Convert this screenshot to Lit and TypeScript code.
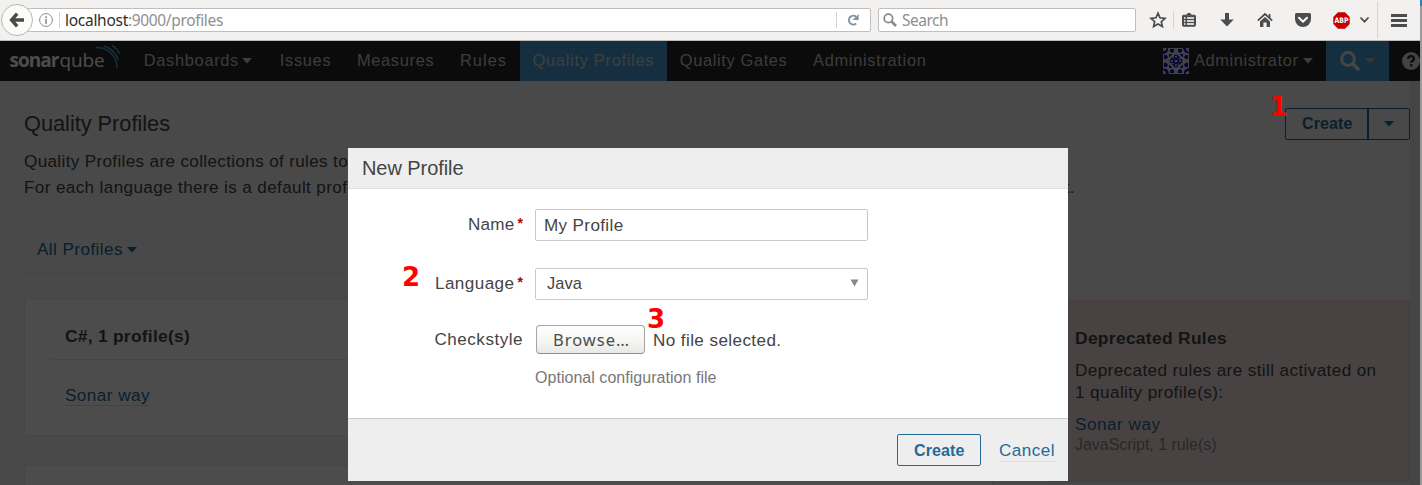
import { LitElement, html, svg, css } from "lit";
import { customElement, property } from "lit/decorators.js";

/** A single line of text tracked so that it takes up exactly `w` pixels. */
@customElement("fit-text")
class FitText extends LitElement {
  @property() text = "";
  @property({ type: Number }) w = 0;
  static styles = css`
    :host { display: inline-block; white-space: pre; flex: none; }
  `;
  render() {
    return html`<span>${this.text}</span>`;
  }
  updated() {
    const span = this.renderRoot.querySelector("span") as HTMLElement;
    span.style.letterSpacing = "0";
    const natural = span.getBoundingClientRect().width;
    span.style.letterSpacing = `${(this.w - natural) / this.text.length}px`;
  }
}

const fit = (text: string, w: number) => html`<fit-text .text=${text} .w=${w}></fit-text>`;
const caret = (w = 10) => html`<svg class="caret" width=${w} height="6" viewBox="0 0 10 6"><path d="M0 0H10L5 5.6Z" fill="currentColor" /></svg>`;

@customElement("browser-bar")
class BrowserBar extends LitElement {
  static styles = css`
    :host { display: flex; align-items: center; height: 40px; background: #f2f1f0; border-bottom: 1px solid #bdbbb8; font: 15.5px/24px "Noto Sans", sans-serif; color: #8f8f8f; position: relative; }
    svg { display: block; overflow: visible; }
    .back { width: 30px; height: 30px; flex: none; border: 1px solid #bab8b5; border-radius: 50%; background: #fbfbfa; margin-left: 1px; display: grid; place-items: center; z-index: 1; }
    .url { width: 856px; margin-left: -18px; padding-left: 23px; box-sizing: border-box; }
    .field { display: flex; align-items: center; height: 24px; box-sizing: border-box; border: 1px solid #c1bfbd; border-radius: 2px; background: #fff; }
    .info { margin-right: 6px; }
    .sep { width: 1px; height: 16px; background: #d4d4d4; }
    .host { color: #2e2e2e; margin-left: 5px; }
    .grow { flex: 1; }
    .reload { margin: 0 11px 0 10px; }
    .search { width: 258px; margin-left: 7px; padding-left: 4px; }
    .search fit-text { margin-left: 5px; }
    .tools { display: flex; align-items: center; height: 40px; margin-left: 10px; color: #4c4c4c; }
    .cell { width: 38px; display: grid; place-items: center; }
    .star { width: 24px; }
    .drop { width: 8px; justify-content: center; }
    .tools .sep { margin: 0 -4px 0 3px; height: 18px; }
    .tools .sep.end { margin: 0 13px 0 9px; height: 36px; }
  `;
  render() {
    return html`
      <div class="back"><svg width="14" height="14" viewBox="0 0 14 14"><path d="M7.2 .6 1.6 7l5.6 6.4M2 7H14" fill="none" stroke="#4a4a4a" stroke-width="3.4" /></svg></div>
      <div class="field url">
        <svg class="info" width="14" height="14" viewBox="0 0 14 14"><circle cx="7" cy="7" r="6.4" fill="none" stroke="#8c8c8c" /><path d="M7 6v5M7 3.2v1.7" stroke="#8c8c8c" stroke-width="1.6" /></svg>
        <div class="sep"></div>
        <span class="host">${fit("localhost", 63)}</span>${fit(":9000/profiles", 95)}
        <div class="grow"></div>
        <div class="sep"></div>
        <svg class="reload" width="12" height="12" viewBox="0 0 12 12"><path d="M9.2 9.5A4.4 4.4 0 1 1 9.3 2.9" fill="none" stroke="#8494a3" stroke-width="2" /><path d="M11.6 0V6H5.6Z" fill="#8494a3" /></svg>
      </div>
      <div class="field search">
        <svg width="14" height="14" viewBox="0 0 14 14"><circle cx="5.4" cy="5.4" r="4.2" fill="none" stroke="#8a8a8a" stroke-width="1.8" /><path d="M8.5 8.5 13 13" stroke="#8a8a8a" stroke-width="2.6" /></svg>
        ${fit("Search", 46)}
      </div>
      <div class="tools">
        <div class="cell star"><svg width="16" height="16" viewBox="0 0 16 16"><path d="M8 1.2 10 5.8 15 6.3 11.3 9.7 12.4 14.6 8 12 3.6 14.6 4.7 9.7 1 6.3 6 5.8Z" fill="none" stroke="currentColor" stroke-width="1.7" /></svg></div>
        <div class="sep"></div>
        <div class="cell list"><svg width="14" height="14" viewBox="0 0 14 14"><path d="M1.5 2.2h11q1 0 1 1v9q0 1-1 1h-11q-1 0-1-1v-9q0-1 1-1ZM5 2Q5 .3 7 .3T9 2" fill="#4c4c4c" stroke="#4c4c4c" /><path d="M2 5h1.5M5 5h7M2 8h1.5M5 8h7M2 11h1.5M5 11h7" stroke="#fff" stroke-width="1.5" /></svg></div>
        <div class="cell"><svg width="14" height="14" viewBox="0 0 14 14"><path d="M5 0h4v6.5h4.7L7 13.6.3 6.5H5Z" fill="currentColor" /></svg></div>
        <div class="cell"><svg width="16" height="14" viewBox="0 0 16 14"><path d="M.8 7.6 8 1l7.2 6.6" fill="none" stroke="currentColor" stroke-width="1.7" /><path d="M3 8.6 8 4.1l5 4.5V14H9.6V9.5H6.4V14H3Z" fill="currentColor" /><path d="M11.6 1h1.8v4l-1.8-1.6Z" fill="currentColor" /></svg></div>
        <div class="cell"><svg width="16" height="14" viewBox="0 0 16 14"><path d="M1.5 0h13Q16 0 16 1.5V6A8 8 0 0 1 0 6V1.5Q0 0 1.5 0Z" fill="currentColor" /><path d="M4 4.8 8 8.6l4-3.8" fill="none" stroke="#fff" stroke-width="2" stroke-linecap="round" /></svg></div>
        <div class="cell"><svg width="17" height="17" viewBox="0 0 17 17"><path d="M5 .3h7L16.7 5v7L12 16.7H5L.3 12V5Z" fill="#c40000" /><text x="8.5" y="11.3" font-size="7.5" font-weight="bold" font-family="DejaVu Sans, sans-serif" text-anchor="middle" fill="#fff" textLength="14" lengthAdjust="spacingAndGlyphs">ABP</text></svg></div>
        <div class="cell drop"><svg width="9" height="6" viewBox="0 0 9 6"><path d="M.5 .5l4 4.2 4-4.2" fill="none" stroke="currentColor" stroke-width="1.8" /></svg></div>
        <div class="sep end"></div>
        <svg width="16" height="13" viewBox="0 0 16 13"><path d="M0 1.5H16M0 6.5H16M0 11.5H16" stroke="currentColor" stroke-width="2.8" /></svg>
      </div>
    `;
  }
}

@customElement("top-nav")
class TopNav extends LitElement {
  static styles = css`
    :host { display: flex; align-items: stretch; height: 40px; background: #262626; color: #cacaca; font: 16.4px/37px "Liberation Sans", Arial, sans-serif; overflow: hidden; }
    svg { display: block; overflow: visible; flex: none; }
    .logo { display: flex; width: 131px; padding-left: 9.5px; box-sizing: border-box; font: 19px/39px "Open Sans", sans-serif; color: #fff; }
    .logo b { font-weight: 700; }
    .qube { font-weight: 400; margin-left: 1px; }
    .arcs { margin-left: -9px; }
    .item { display: flex; align-items: center; padding: 0 12.8px; gap: 3px; }
    .item.menu { padding-right: 15px; }
    .item fit-text, .user fit-text { height: 39px; }
    .on { background: #4b9fd5; color: #d2d2d2; }
    .grow { flex: 1; }
    .user { display: flex; align-items: center; gap: 4px; margin-right: 13.5px; }
    .user .face { margin-right: 1px; }
    .find { width: 63px; box-sizing: border-box; padding-left: 14px; display: flex; align-items: center; gap: 5px; background: #4b9fd5; color: #e6e6e6; }
    .find .caret { color: #b5b5b5; }
    .help { width: 18px; align-self: center; margin: 0 0 0 13px; }
  `;
  render() {
    const item = (text: string, w: number, menu = false, on = false) =>
      html`<div class="item ${on ? "on" : ""} ${menu ? "menu" : ""}">${fit(text, w)}${menu ? caret() : ""}</div>`;
    const tile = [0, 1, 2, 3].map((i) => svg`<g transform="rotate(${i * 90} 13 13)" fill="#0a0ac8">
      <path d="M0 3Q3 3 4 0H5Q6 5 0 6ZM7 1h4v2.5L9 5 7 3.5ZM15 1h4v2.5L17 5 15 3.5Z" />
      <path d="M6 6h3.4L6 9.4Z" />
      <circle cx="13" cy="8.8" r="1.7" fill="none" stroke="#0a0ac8" stroke-width="1.1" />
      <circle cx="9.4" cy="10.4" r="1.1" /></g>`);
    return html`
      <div class="logo"><b>${fit("sonar", 49)}</b><span class="qube">${fit("qube", 45)}</span>
        <svg class="arcs" width="24" height="24" viewBox="0 0 24 24"><g transform="translate(0 4)" fill="none" stroke="#4b9fd5" stroke-width="1.5"><path d="M0 2.6A20 20 0 0 1 21 23" /><path d="M8 1A23 23 0 0 1 22.5 15.5" /><path d="M16 .3A20 20 0 0 1 23.8 9" /></g></svg>
      </div>
      ${item("Dashboards", 95.2, true)} ${item("Issues", 51.5)} ${item("Measures", 77.5)} ${item("Rules", 47)}
      ${item("Quality Profiles", 121.6, false, true)} ${item("Quality Gates", 107.7)} ${item("Administration", 113.5)}
      <div class="grow"></div>
      <div class="user">
        <svg class="face" width="26" height="26" viewBox="0 0 26 26"><rect width="26" height="26" fill="#dcdcdc" />${tile}<circle cx="13" cy="13" r="2.2" fill="none" stroke="#0a0ac8" stroke-width="1.4" /></svg>
        ${fit("Administrator", 104.5)}${caret()}
      </div>
      <div class="find">
        <svg width="20" height="20" viewBox="0 0 20 20"><circle cx="8" cy="8" r="6.4" fill="none" stroke="currentColor" stroke-width="3" /><path d="M13 13l5 5" stroke="currentColor" stroke-width="3.6" stroke-linecap="round" /></svg>
        ${caret()}
      </div>
      <svg class="help" width="18" height="18" viewBox="0 0 18 18"><circle cx="9" cy="9" r="9" fill="#e0e0e0" /><path d="M6 6.8Q6.2 4.2 9 4.2T12 6.7Q12 8 10.4 8.8 9.2 9.4 9.2 10.8" fill="none" stroke="#262626" stroke-width="2.3" /><path d="M8 12.2h2.4v2.2H8Z" fill="#262626" /></svg>
    `;
  }
}

@customElement("profiles-page")
class ProfilesPage extends LitElement {
  static styles = css`
    :host { display: block; height: 404px; box-sizing: border-box; padding: 26px 10px 0 24px; background: #f3f3f3; border-right: 10px solid #e8e8e8; color: #444; font: 17.1px/26px "Liberation Sans", Arial, sans-serif; overflow: hidden; }
    fit-text { display: block; }
    .caret { display: block; }
    .head { display: flex; justify-content: space-between; height: 42px; margin-right: -10px; }
    .head h1 { margin: 4px 0 0; font-size: 21.8px; font-weight: 400; line-height: 26px; }
    .split { display: flex; width: 125px; height: 32px; box-sizing: border-box; margin-top: 1px; border: 1px solid #236a97; border-radius: 2px; color: #236a97; font-weight: 700; font-size: 16px; line-height: 30px; }
    .split .main { flex: 1; padding-left: 16px; border-right: 2px solid #236a97; }
    .split .more { width: 40px; display: grid; place-items: center; }
    .link { color: #236a97; }
    .filter { display: flex; align-items: center; gap: 4px; width: 956px; box-sizing: border-box; height: 47px; margin-top: 25px; padding-left: 13px; border-bottom: 1px solid #e6e6e6; color: #236a97; }
    .filter fit-text { margin-top: 1px; }
    .filter .caret { margin-top: 2px; }
    .cols { display: flex; justify-content: space-between; margin: 26px -10px 0 0; }
    .left { width: 969px; display: grid; gap: 29px; }
    .card { height: 137px; box-sizing: border-box; border: 1px solid #e6e6e6; border-radius: 2px; background: #fff; padding: 23px 26px; }
    .card h2 { margin: 0; padding: 0 0 10px 14px; border-bottom: 1px solid #e6e6e6; font-size: 17.4px; line-height: 26px; }
    .card .row { display: inline-block; margin: 26px 0 0 14px; line-height: 19px; border-bottom: 1px solid #cae3f2; color: #236a97; }
    .warn { width: 362px; height: 182px; box-sizing: border-box; border: 1px solid #ebccd1; border-radius: 2px; background: #f2dede; padding: 26px; margin-top: 1px; line-height: 22px; }
    .warn b { display: block; font-size: 17.4px; }
    .warn p { margin: 11px 0 10px; }
    .warn .note { color: #888; font-size: 16px; line-height: 18px; }
  `;
  render() {
    return html`
      <div class="head">
        <h1>${fit("Quality Profiles", 146)}</h1>
        <div class="split"><div class="main">${fit("Create", 50.5)}</div><div class="more">${caret()}</div></div>
      </div>
      ${fit("Quality Profiles are collections of rules to apply during an analysis.", 526)}
      ${fit("For each language there is a default profile. All projects not explicitly assigned to some other profile will be analyzed with the default.", 1051)}
      <div class="filter">${fit("All Profiles", 86)}${caret()}</div>
      <div class="cols">
        <div class="left">
          <div class="card">
            <h2>${fit("C#, 1 profile(s)", 125)}</h2>
            <div class="row">${fit("Sonar way", 85)}</div>
          </div>
          <div class="card"></div>
        </div>
        <div class="warn">
          <b>${fit("Deprecated Rules", 152)}</b>
          <p>${fit("Deprecated rules are still activated on", 301.5)}${fit("1 quality profile(s):", 148.5)}</p>
          <div class="link">${fit("Sonar way", 85.5)}</div>
          <div class="note">${fit("JavaScript, 1 rule(s)", 141.5)}</div>
        </div>
      </div>
    `;
  }
}

@customElement("new-profile-dialog")
class NewProfileDialog extends LitElement {
  static styles = css`
    :host { display: flex; flex-direction: column; width: 720px; height: 333px; background: #fff; color: #444; font: 17.1px/22px "Liberation Sans", Arial, sans-serif; }
    header { height: 40px; background: #eee; border-bottom: 1px solid #ddd; padding-left: 14px; font-size: 20px; line-height: 40px; }
    form { flex: 1; padding-top: 20px; }
    .row { display: flex; align-items: center; height: 32px; margin-bottom: 27px; }
    .row label { display: flex; justify-content: flex-end; width: 175px; margin: 0 12px 0 0; }
    .row label i { font-style: normal; color: #b00000; font-size: 14px; margin-left: 3px; line-height: 18px; width: 5.5px; font-weight: bold; }
    .box { display: flex; align-items: center; justify-content: space-between; width: 333px; height: 32px; box-sizing: border-box; border: 1px solid #c9c9c9; border-radius: 2px; padding: 1px 8px 0 8px; }
    .box.select { padding: 0 8px 2px 11px; font-size: 16.4px; }
    .box.select fit-text { margin-top: -1px; }
    .file { height: 30px; margin: -2px 0 13px; }
    .browse { width: 109px; height: 29px; box-sizing: border-box; border: 1px solid #a6a5a4; border-bottom-color: #8e8d8c; border-radius: 4px; background: linear-gradient(#fff, #f4f4f3 60%, #e9e8e7); margin: -1px 8px 0 1px; padding-left: 16px; font: 16.5px/28px "Noto Sans", sans-serif; color: #4c4c4c; }
    .file > fit-text { margin-top: 1px; }
    .hint { padding-left: 187px; color: #777; font-size: 16px; line-height: 20px; }
    footer { height: 62px; display: flex; align-items: center; justify-content: flex-end; background: #eee; border-top: 1px solid #ccc; padding-right: 13px; color: #236a97; }
    footer button { width: 84px; height: 32px; box-sizing: border-box; border: 1px solid #236a97; border-radius: 2px; background: none; padding: 1px 0 0; color: #236a97; font: bold 16px/29px "Liberation Sans", Arial, sans-serif; margin-right: 18px; }
    button fit-text { margin-left: 16px; text-align: left; }
    .cancel { border-bottom: 1px solid #cae3f2; line-height: 21px; padding-top: 1px; }
    fit-text { display: block; }
  `;
  render() {
    return html`
      <header>${fit("New Profile", 101.5)}</header>
      <form>
        <div class="row"><label>${fit("Name", 46.5)}<i>*</i></label><div class="box">${fit("My Profile", 79.5)}</div></div>
        <div class="row"><label>${fit("Language", 79.5)}<i>*</i></label><div class="box select">${fit("Java", 35)}<svg width="9" height="8" viewBox="0 0 9 8"><path d="M.5 .5h8L4.5 7.5Z" fill="#888" /></svg></div></div>
        <div class="row file"><label>${fit("Checkstyle", 88.5)}</label><div class="browse">${fit("Browse…", 77)}</div>${fit("No file selected.", 128.5)}</div>
        <div class="hint">${fit("Optional configuration file", 181.5)}</div>
      </form>
      <footer><button type="button">${fit("Create", 50.5)}</button><div class="cancel">${fit("Cancel", 56)}</div></footer>
    `;
  }
}

@customElement("app-root")
class AppRoot extends LitElement {
  static styles = css`
    :host { display: flex; width: 1422px; height: 485px; overflow: hidden; position: relative; }
    .window { width: 1420px; flex: none; }
    .behind { width: 2px; background: #9a9a9a; border-top: 6px solid #2f7fb0; box-sizing: border-box; }
    .view { position: relative; }
    .shade { position: absolute; inset: 0; background: rgba(0, 0, 0, 0.7); }
    new-profile-dialog { position: absolute; left: 348px; top: 107px; }
    .mark { position: absolute; color: #f00; font: bold 26px/30px "DejaVu Sans", sans-serif; }
    .m1 { left: 1269.5px; top: 92px; }
    .m2 { left: 402px; top: 262px; }
    .m3 { left: 647px; top: 304px; }
  `;
  render() {
    return html`
      <div class="window">
        <browser-bar></browser-bar>
        <div class="view">
          <top-nav></top-nav>
          <profiles-page></profiles-page>
          <div class="shade"></div>
          <new-profile-dialog></new-profile-dialog>
        </div>
      </div>
      <div class="behind"></div>
      <div class="mark m1">1</div>
      <div class="mark m2">2</div>
      <div class="mark m3">3</div>
    `;
  }
}
